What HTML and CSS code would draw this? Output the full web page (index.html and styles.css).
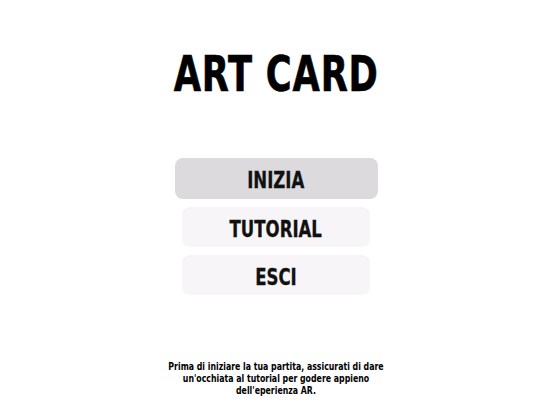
FILE: index.html
```html
<!DOCTYPE html>
<html lang="it">
<head>
<meta charset="utf-8">
<link rel="stylesheet" href="styles.css">
</head>
<body>
<main class="screen">
  <h1 class="title"><span class="squeeze">ART CARD</span></h1>
  <nav class="menu">
    <button class="btn btn-active"><span class="squeeze">INIZIA</span></button>
    <button class="btn"><span class="squeeze">TUTORIAL</span></button>
    <button class="btn"><span class="squeeze">ESCI</span></button>
  </nav>
  <p class="note">Prima di iniziare la tua partita, assicurati di dare un'occhiata al tutorial per godere appieno dell'eperienza AR.</p>
</main>
</body>
</html>
```
FILE: styles.css
```css
html, body {
  margin: 0;
  padding: 0;
  background: #ffffff;
}
.screen {
  width: 552px;
  height: 414px;
  display: flex;
  flex-direction: column;
  align-items: center;
  font-family: "DejaVu Sans Condensed", "Liberation Sans", sans-serif;
  color: #000;
}
.squeeze {
  display: inline-block;
  transform: scaleX(0.8);
}
.title {
  margin: 49px 0 0 0;
  font-size: 49px;
  line-height: 52px;
  font-weight: 700;
  letter-spacing: 1px;
  -webkit-text-stroke: 0.6px #000;
}
.menu {
  margin-top: 57px;
  display: flex;
  flex-direction: column;
  align-items: center;
  gap: 8px;
}
.btn {
  width: 188px;
  height: 40px;
  border: none;
  border-radius: 8px;
  background: #f7f5f7;
  font-family: inherit;
  font-size: 23px;
  font-weight: 700;
  color: #111;
  padding: 3px 0 0 0;
  -webkit-text-stroke: 0.3px #111;
}
.btn-active {
  width: 203px;
  height: 41px;
  background: #dcdadc;
}
.note {
  margin: 66px 0 0 0;
  width: 290px;
  text-align: center;
  font-size: 11px;
  line-height: 12px;
  font-weight: 700;
  transform: scaleX(0.79);
}
```
